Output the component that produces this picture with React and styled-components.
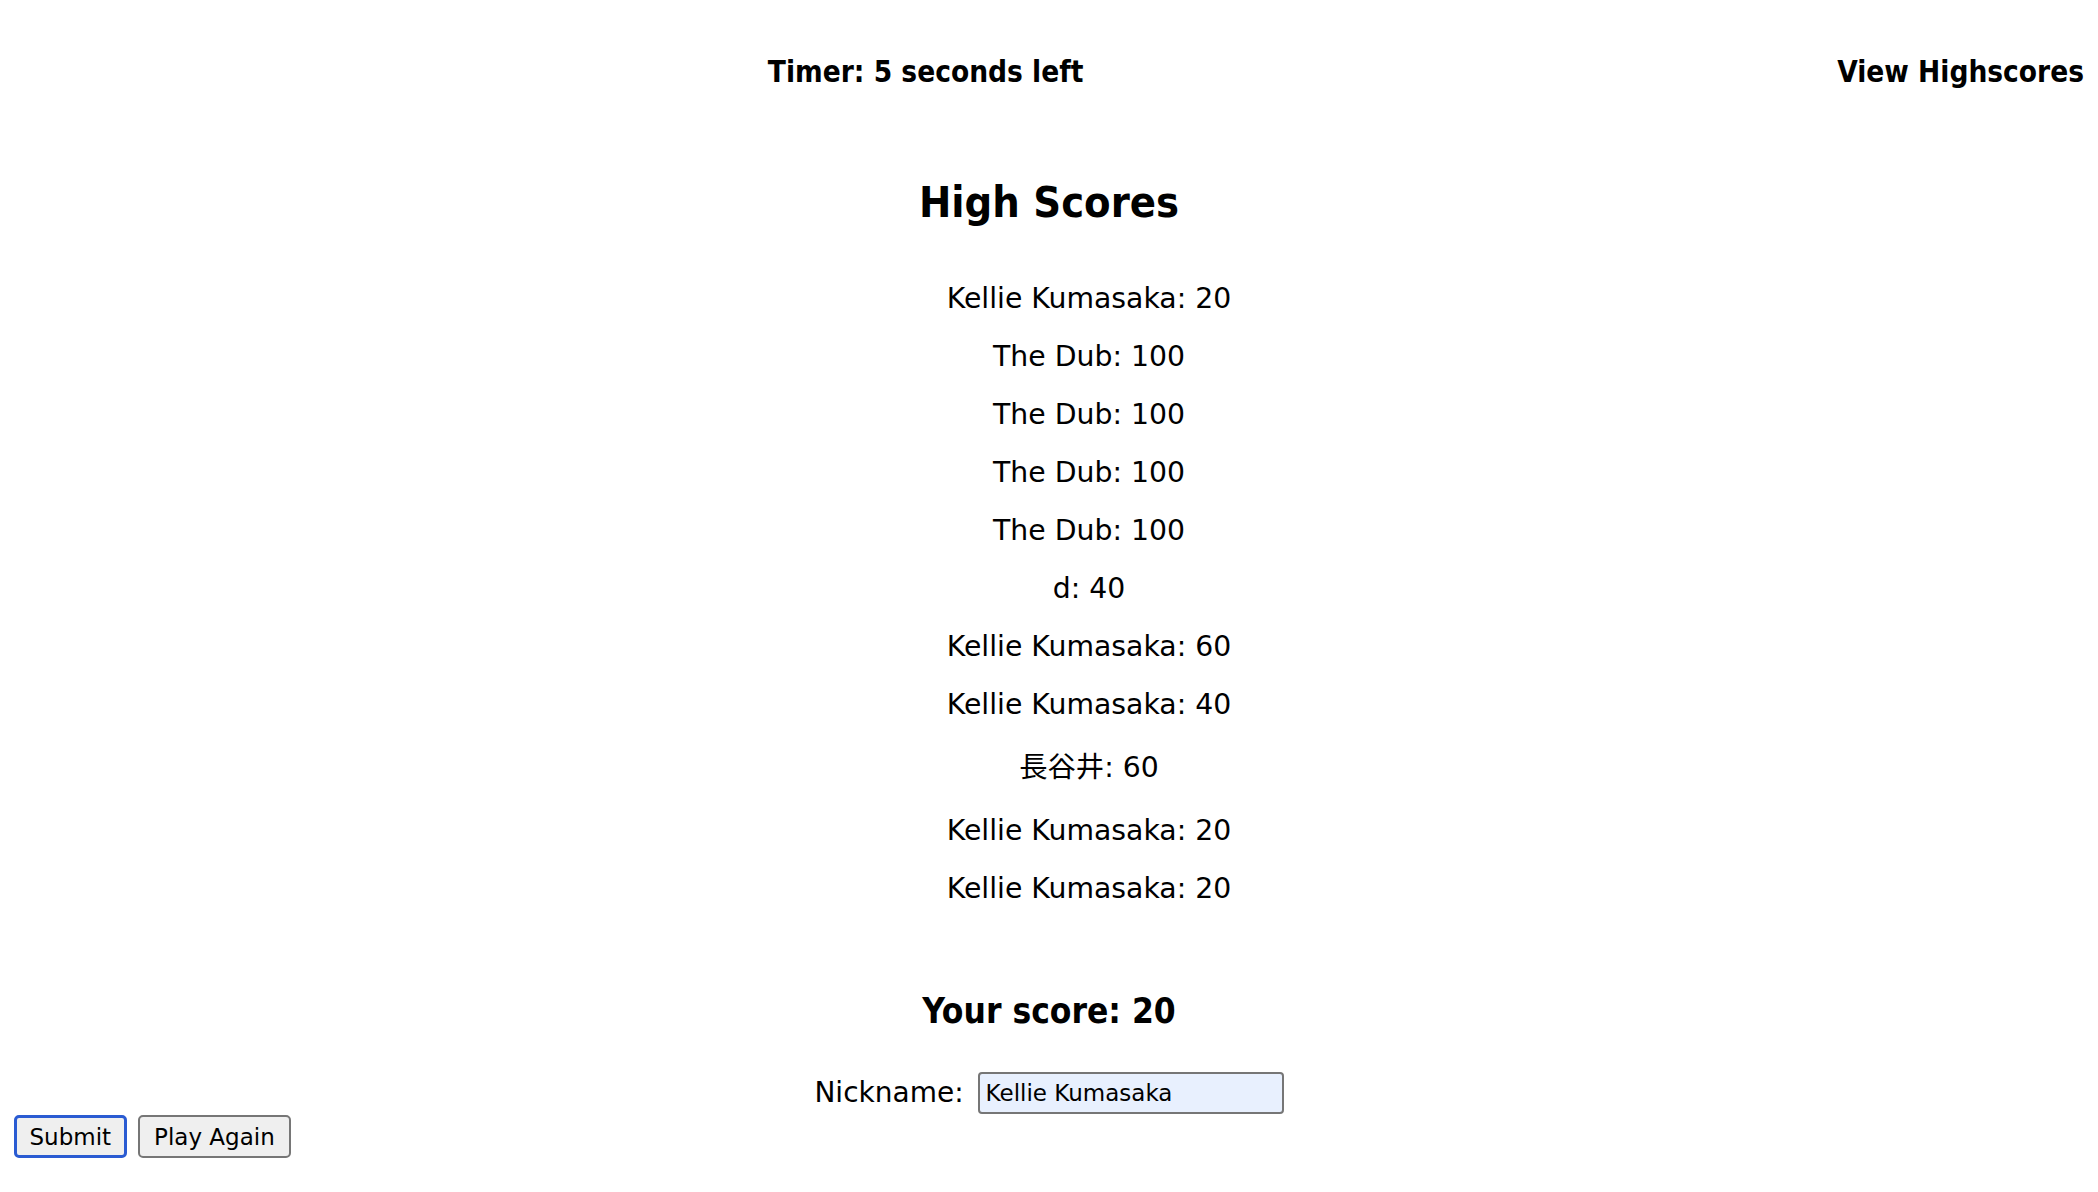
import React from "react";
import styled, { createGlobalStyle } from "styled-components";

const scores = [
    { name: "Kellie Kumasaka", score: 20 },
    { name: "The Dub", score: 100 },
    { name: "The Dub", score: 100 },
    { name: "The Dub", score: 100 },
    { name: "The Dub", score: 100 },
    { name: "d", score: 40 },
    { name: "Kellie Kumasaka", score: 60 },
    { name: "Kellie Kumasaka", score: 40 },
    { name: "長谷井", score: 60, cjk: true },
    { name: "Kellie Kumasaka", score: 20 },
    { name: "Kellie Kumasaka", score: 20 },
];

const App = () => {
    return (
        <>
            <GlobalStyle />
            <Header>
                <Spacer />
                <HeaderText>Timer: 5 seconds left</HeaderText>
                <HeaderText>View Highscores</HeaderText>
            </Header>
            <Title>High Scores</Title>
            <ScoreList>
                {scores.map((s, i) => (
                    <ScoreRow key={i} $tall={s.cjk}>
                        {s.name}: {s.score}
                    </ScoreRow>
                ))}
            </ScoreList>
            <YourScore>Your score: 20</YourScore>
            <NicknameRow>
                <Label htmlFor="nickname">Nickname:</Label>
                <NicknameInput id="nickname" defaultValue="Kellie Kumasaka" />
            </NicknameRow>
            <ButtonRow>
                <Button $focused>Submit</Button>
                <Button>Play Again</Button>
            </ButtonRow>
        </>
    );
};
export default App;

const GlobalStyle = createGlobalStyle`
    body {
        margin: 14px;
        background: #fff;
        color: #000;
        font-family: "DejaVu Sans", "Noto Sans CJK JP", sans-serif;
        font-size: 28px;
    }
`;

const boldFont = `"DejaVu Sans Condensed", "DejaVu Sans", sans-serif`;

const Header = styled.header`
    display: flex;
    justify-content: space-between;
    align-items: center;
    height: 34px;
    margin-top: 41px;
`;

const Spacer = styled.div`
    width: 0;
`;

const HeaderText = styled.div`
    font-family: ${boldFont};
    font-weight: bold;
    font-size: 29.5px;
    line-height: 34px;
    cursor: pointer;
`;

const Title = styled.h1`
    margin: 88px 0 57px;
    font-family: ${boldFont};
    font-weight: bold;
    font-size: 43px;
    line-height: 50px;
    text-align: center;
`;

const ScoreList = styled.ul`
    display: flex;
    flex-direction: column;
    gap: 28px;
    margin: 0;
    padding: 0 0 0 80px;
    list-style: none;
    text-align: center;
`;

const ScoreRow = styled.li`
    font-size: 28.3px;
    line-height: ${(p) => (p.$tall ? "40px" : "30px")};
`;

const YourScore = styled.h2`
    margin: 86px 0 0;
    font-family: ${boldFont};
    font-weight: bold;
    font-size: 35px;
    line-height: 42px;
    text-align: center;
`;

const NicknameRow = styled.div`
    display: flex;
    justify-content: center;
    align-items: center;
    gap: 14px;
    margin-top: 40px;
`;

const Label = styled.label`
    font-size: 28px;
    line-height: 42px;
`;

const NicknameInput = styled.input`
    box-sizing: border-box;
    width: 306px;
    height: 42px;
    padding: 0 6px;
    border: 2px solid #767676;
    border-radius: 4px;
    background: #e8f0fe;
    color: #000;
    font-family: "DejaVu Sans", sans-serif;
    font-size: 23px;
    outline: none;
`;

const ButtonRow = styled.div`
    display: flex;
    gap: 11px;
    margin-top: 1px;
`;

const Button = styled.button`
    box-sizing: border-box;
    height: 43px;
    padding: 0 ${(p) => (p.$focused ? "12.5px" : "14.5px")};
    border: ${(p) => (p.$focused ? "3px solid #2a5bd2" : "2px solid #767676")};
    border-radius: 5px;
    background: #efefef;
    color: #000;
    font-family: "DejaVu Sans", sans-serif;
    font-size: 23px;
    cursor: pointer;
`;
